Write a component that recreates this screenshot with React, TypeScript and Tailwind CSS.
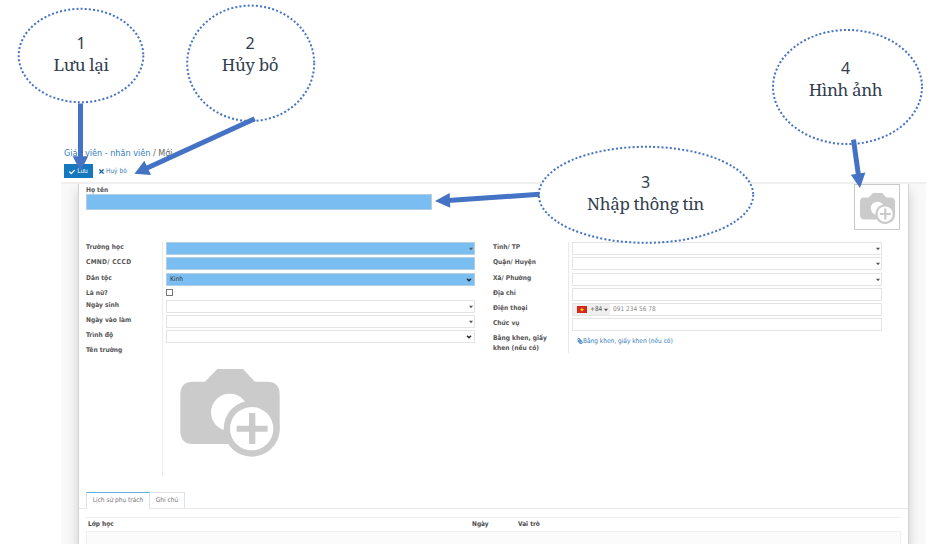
import type { ReactNode } from "react";
import { FaCheck, FaTimes, FaPaperclip } from "react-icons/fa";

function Camera({ className }: { className: string }) {
  return (
    <svg viewBox="92 58 298 264" className={className}>
      <path
        d="M130 96H166L203 58H280L316 96H352Q390 96 390 134V237A84 84 0 0 1 237 283H130Q92 283 92 245V134Q92 96 130 96Z"
        fill="#cbcbcb"
      />
      <circle cx="240" cy="188" r="56" fill="#fff" />
      <circle cx="306" cy="237" r="84" fill="#cbcbcb" />
      <circle cx="306" cy="237" r="65" fill="#fff" />
      <path d="M298 190H317V228H354V246H317V283H298V246H261V228H298Z" fill="#cbcbcb" />
    </svg>
  );
}

function Caret({ bold }: { bold?: boolean }) {
  return bold ? (
    <svg viewBox="0 0 6 4" className="h-[4px] w-[6px] shrink-0">
      <path d="M1 .8L3 2.8L5 .8" fill="none" stroke="#222" strokeWidth="1.3" />
    </svg>
  ) : (
    <svg viewBox="0 0 6 4" className="h-[4px] w-[6px] shrink-0">
      <path d="M1 .7H5L3 3.2Z" fill="#555" />
    </svg>
  );
}

function Label({ h, children, tracking = "" }: { h: string; children: ReactNode; tracking?: string }) {
  return (
    <div className={`${h} whitespace-nowrap text-[6.6px] leading-[10px] font-bold text-[#555] ${tracking}`}>
      {children}
    </div>
  );
}

function Field({ blue, caret, gap, children }: { blue?: boolean; caret?: "thin" | "bold"; gap: string; children?: ReactNode }) {
  return (
    <div
      className={`${gap} flex h-[13px] items-center justify-between border text-[6.5px] ${
        blue ? "border-[#b5cfe2] bg-[#7abef1]" : "border-[#e4e4e4] bg-white"
      } ${caret === "bold" ? "pr-[2px]" : ""}`}
    >
      <div className="flex h-full items-center">{children}</div>
      {caret && <Caret bold={caret === "bold"} />}
    </div>
  );
}

function Callout({ place, num, text }: { place: string; num: string; text: string }) {
  return (
    <div className={`absolute flex flex-col items-center whitespace-nowrap text-[#323e4f] ${place}`}>
      <span className="font-['Noto_Sans',sans-serif] text-[16px] leading-[22px]">{num}</span>
      <span className="font-['Noto_Serif','DejaVu_Serif_Condensed','DejaVu_Serif',serif] text-[17px] leading-[22px] tracking-[-0.35px]">
        {text}
      </span>
    </div>
  );
}

export default function App() {
  return (
    <div className="relative h-[560px] w-[952px] overflow-hidden bg-white font-['DejaVu_Sans_Condensed','DejaVu_Sans',sans-serif]">
      <div className="ml-[61px] flex h-[544px] w-[865px] flex-col pt-[147px]">
        <header className="h-[35px] shrink-0 pl-[3px]">
          <h1 className="h-[17px] whitespace-nowrap text-[9px] leading-[13px] text-[#666]">
            <span className="text-[#337ebd]">Giáo viên - nhân viên</span> / Mới
          </h1>
          <div className="flex h-[14px] items-center text-[6.5px]">
            <button className="flex h-[14px] w-[29px] items-center justify-center gap-[2px] bg-[#1577bd] pt-px text-white">
              <FaCheck className="size-[6px]" />
              Lưu
            </button>
            <button className="ml-[5px] flex items-center gap-px pt-px text-[#337ebd]">
              <FaTimes className="size-[7px] text-[#1a65a3]" />
              Huỷ bỏ
            </button>
          </div>
        </header>

        <main className="flex min-h-0 flex-1 justify-center overflow-hidden border-t-2 border-[#efefef] bg-[#f9f9f9]">
          <section className="-mt-[2px] flex w-[831px] flex-col border-x border-[#d2d2d8] bg-white shadow-[0_8px_12px_rgba(0,0,0,0.18)]">
            <div className="flex h-[60px] shrink-0 justify-between border-t-2 border-[#efefef] pr-[8px] pl-[7px]">
              <div className="w-[346px] pt-px">
                <Label h="h-[9px]">Họ tên</Label>
                <div className="h-[16px] border border-[#b5cfe2] bg-[#7abef1]" />
              </div>
              <div className="flex h-[46px] w-[46px] items-center justify-center border border-[#c9c9c9]">
                <Camera className="mt-[3px] h-[31px] w-[35px]" />
              </div>
            </div>

            <div className="flex h-[250px] shrink-0 pl-[7px]">
              <div className="w-[76px]">
                <Label h="h-[15px]" tracking="tracking-[0.1px]">Trường học</Label>
                <Label h="h-[16px]" tracking="tracking-[0.3px]">CMND/ CCCD</Label>
                <Label h="h-[15px]">Dân tộc</Label>
                <Label h="h-[12px]">Là nữ?</Label>
                <Label h="h-[15px]">Ngày sinh</Label>
                <Label h="h-[15px]">Ngày vào làm</Label>
                <Label h="h-[15px]">Trình độ</Label>
                <Label h="h-[15px]">Tên trường</Label>
              </div>
              <div className="h-[234px] w-[313px] border-l border-[#ededed] pl-[3px]">
                <Field blue caret="thin" gap="mb-[2px]" />
                <Field blue gap="mb-[3px]" />
                <Field blue caret="bold" gap="mb-[3px]">
                  <span className="pt-px pl-[3px] text-[#333]">Kinh</span>
                </Field>
                <div className="mb-[4px] h-[7px] w-[7px] border border-[#777] bg-white" />
                <Field caret="thin" gap="mb-[2px]" />
                <Field caret="thin" gap="mb-[2px]" />
                <Field caret="bold" gap="mb-[26px]" />
                <Camera className="mt-[0.5px] ml-[14px] h-[88px] w-[100px]" />
              </div>

              <div className="ml-[18px] w-[75px]">
                <Label h="h-[15px]">Tỉnh/ TP</Label>
                <Label h="h-[16px]">Quận/ Huyện</Label>
                <Label h="h-[15px]">Xã/ Phường</Label>
                <Label h="h-[15px]">Địa chỉ</Label>
                <Label h="h-[15px]">Điện thoại</Label>
                <Label h="h-[15px]">Chức vụ</Label>
                <Label h="h-[20px]">
                  Bằng khen, giấy
                  <br />
                  khen (nếu có)
                </Label>
              </div>
              <div className="h-[111px] w-[314px] border-l border-[#e8e8e8] pl-[3px]">
                <Field caret="thin" gap="mb-[2px]" />
                <Field caret="thin" gap="mb-[3px]" />
                <Field caret="thin" gap="mb-[2px]" />
                <Field gap="mb-[2px]" />
                <Field gap="mb-[2px]">
                  <div className="flex h-full w-[37px] items-center bg-[#efefef] pl-[4px] text-[#555]">
                    <svg viewBox="0 0 10 7" className="mr-[3px] h-[7px] w-[10px] shrink-0">
                      <rect width="10" height="7" fill="#da251d" />
                      <path d="M5 1.5L5.6 3H7L5.9 3.9L6.3 5.4L5 4.5L3.7 5.4L4.1 3.9L3 3H4.4Z" fill="#ffef00" />
                    </svg>
                    <span className="mr-px">+84</span>
                    <Caret />
                  </div>
                  <span className="pt-px pl-[3px] text-[#8b8b8b]">091 234 56 78</span>
                </Field>
                <Field gap="mb-[5px]" />
                <div className="flex items-center whitespace-nowrap pl-[5px] text-[6.5px] leading-[10px] text-[#337ebd]">
                  <FaPaperclip className="size-[6px] -scale-x-100" />
                  Bằng khen, giấy khen (nếu có)
                </div>
              </div>
            </div>

            <nav className="flex h-[17px] shrink-0 border-b border-[#e9e9ed] pl-[7px] text-[6.5px] text-[#777]">
              <div className="flex h-[17px] w-[64px] items-center justify-center whitespace-nowrap border-t border-r border-l border-t-[#69b0e0] border-r-[#dee2e8] border-l-[#dee2e8] bg-white">
                Lịch sử phụ trách
              </div>
              <div className="flex h-[16px] w-[35px] items-center justify-center whitespace-nowrap border-t border-r border-[#dee2e8]">
                Ghi chú
              </div>
            </nav>

            <div className="mx-[7px] mt-[8px] flex min-h-0 flex-1 flex-col border-t border-[#f0f0f0]">
              <div className="grid h-[13px] shrink-0 grid-cols-[384px_46px_1fr] items-center pl-[2px] text-[6.5px] font-bold text-[#4c4c4c]">
                <span>Lớp học</span>
                <span>Ngày</span>
                <span>Vai trò</span>
              </div>
              <div className="flex-1 border-x border-t border-[#f0f0f0] bg-[#fbfbfb]" />
            </div>
          </section>
        </main>
      </div>

      {/* Callout outlines and pointers */}
      <svg viewBox="0 0 952 560" className="absolute inset-0 h-[560px] w-[952px]">
        <g fill="#fff" stroke="#4472c4" strokeWidth="2" strokeDasharray="2 2.15">
          <ellipse cx="81" cy="55.5" rx="62.3" ry="46.7" />
          <ellipse cx="250.7" cy="63.3" rx="63.5" ry="57.7" />
          <ellipse cx="646" cy="194.8" rx="107.2" ry="48" />
          <ellipse cx="847.5" cy="87" rx="74.5" ry="57" />
        </g>
        <g stroke="#4472c4" strokeWidth="5">
          <path d="M80.5 103.5V158" />
          <path d="M254.7 118.8L146 168.5" />
          <path d="M539.5 194.3L448 200.4" />
          <path d="M853.5 139.7L858.4 175" />
        </g>
        <g fill="#4472c4">
          <path d="M72.7 156.3H88.2L80.5 171.5Z" />
          <path d="M144.3 160.7L151 175L134.5 173.7Z" />
          <path d="M449.7 193L450.2 207.8L435 201Z" />
          <path d="M850.8 174.8L865.4 172.6L860 188Z" />
        </g>
      </svg>

      <Callout place="left-[31px] top-[32px] w-[100px]" num="1" text="Lưu lại" />
      <Callout place="left-[200px] top-[32px] w-[100px]" num="2" text="Hủy bỏ" />
      <Callout place="left-[575px] top-[171px] w-[141px]" num="3" text="Nhập thông tin" />
      <Callout place="left-[797px] top-[57px] w-[97px]" num="4" text="Hình ảnh" />
    </div>
  );
}
